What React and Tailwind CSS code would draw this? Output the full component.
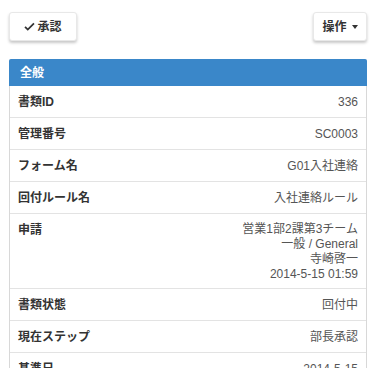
import React from 'react';

const rows = [
  { label: '書類ID', value: ['336'] },
  { label: '管理番号', value: ['SC0003'] },
  { label: 'フォーム名', value: ['G01入社連絡'] },
  { label: '回付ルール名', value: ['入社連絡ルール'] },
  { label: '申請', value: ['営業1部2課第3チーム', '一般 / General', '寺崎啓一', '2014-5-15 01:59'] },
  { label: '書類状態', value: ['回付中'] },
  { label: '現在ステップ', value: ['部長承認'] },
  { label: '基準日', value: ['2014-5-15'] },
];

const App = () => {
  return (
    <div
      className="w-[378px] h-[368px] overflow-hidden bg-white text-[12px]"
      style={{ fontFamily: '"Liberation Sans", "Noto Sans CJK JP", sans-serif' }}
    >
      <div className="flex justify-between pt-[12px] pl-[9px] pr-[11px]">
        <button className="w-[68px] h-[29px] flex items-center justify-center gap-[2px] rounded-[3px] border border-[#e8e8e8] bg-white shadow-[0_2px_3px_rgba(0,0,0,0.22)] font-bold text-[#333] leading-none">
          <svg className="w-[11px] h-[11px]" viewBox="0 0 16 16">
            <path d="M1.5 8.5 L5.5 12.5 L14.5 3.5" fill="none" stroke="#333" strokeWidth="2.6" />
          </svg>
          承認
        </button>
        <button className="w-[54px] h-[29px] flex items-center justify-center gap-[5px] rounded-[3px] border border-[#e8e8e8] bg-white shadow-[0_2px_3px_rgba(0,0,0,0.22)] font-bold text-[#333] leading-none">
          操作
          <span className="w-0 h-0 border-l-[3.5px] border-r-[3.5px] border-t-[4px] border-l-transparent border-r-transparent border-t-[#333]" />
        </button>
      </div>

      <div className="mt-[18px] ml-[9px] w-[358px] rounded-t-[3px] border border-[#d8d8d8] border-b-0">
        <div className="h-[27px] flex items-center px-[11px] bg-[#3a87c9] rounded-t-[2px] text-white font-bold -mx-px -mt-px">
          全般
        </div>
        {rows.map((r) => (
          <div key={r.label} className="flex justify-between items-start px-[8px] py-[7px] border-b border-[#e3e3e3]">
            <div className="h-[17px] flex items-center font-bold text-[#333] whitespace-nowrap">{r.label}</div>
            <div className="flex flex-col items-end text-[#555]">
              {r.value.map((v, i) => (
                <div
                  key={v}
                  className={(r.value.length > 1 ? 'h-[15px] ' : 'h-[17px] ') + 'flex items-center whitespace-nowrap'}
                >
                  {v}
                </div>
              ))}
            </div>
          </div>
        ))}
      </div>
    </div>
  );
};

export default App;
